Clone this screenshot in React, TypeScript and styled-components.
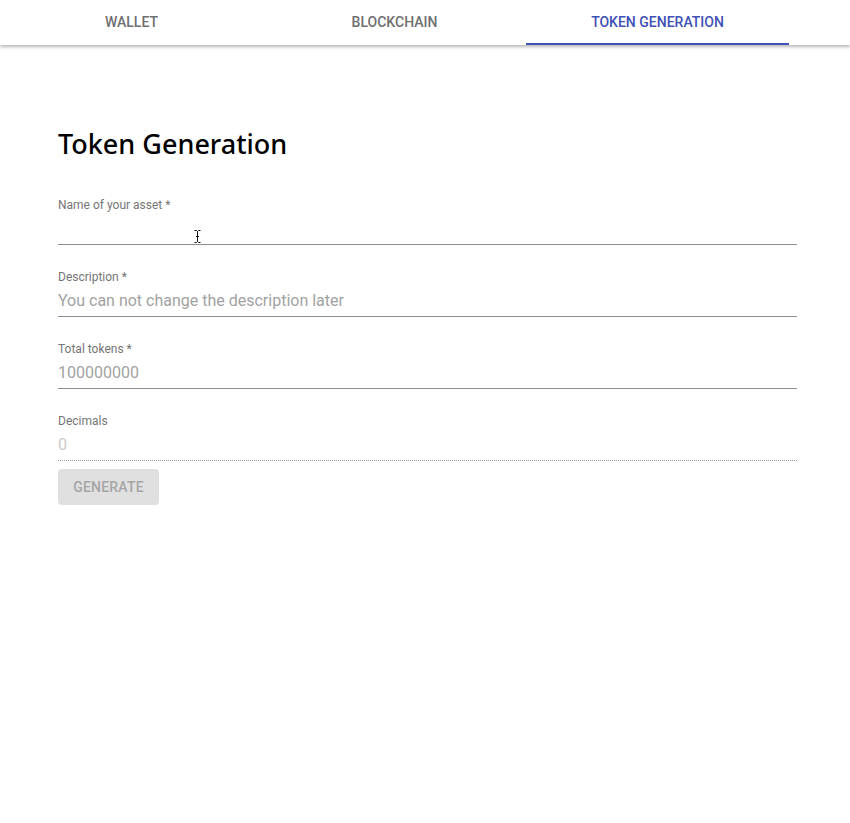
import React from "react";
import styled, { createGlobalStyle } from "styled-components";

const Global = createGlobalStyle`
  html, body { margin: 0; padding: 0; background: #fff; }
  body { font-family: Roboto, "Liberation Sans", sans-serif; }
  * { box-sizing: border-box; }
`;

const TabBar = styled.div`
  display: flex;
  height: 45px;
  background: #fff;
  box-shadow: 0 2px 3px rgba(0, 0, 0, 0.28);
  position: relative;
  z-index: 1;
`;

const Tab = styled.div<{ $active?: boolean }>`
  width: 263px;
  display: flex;
  align-items: center;
  justify-content: center;
  font-family: Roboto, sans-serif;
  font-size: 14px;
  font-weight: 500;
  text-transform: uppercase;
  color: ${(p) => (p.$active ? "#3f51b5" : "#6f6f6f")};
  border-bottom: 2px solid ${(p) => (p.$active ? "#3f51b5" : "transparent")};
`;

const Main = styled.main`
  padding: 83px 53px 0 58px;
`;

const Heading = styled.h1`
  margin: 0 0 38px;
  font-family: "Noto Sans", "Liberation Sans", sans-serif;
  font-weight: 500;
  font-size: 27px;
  line-height: 31px;
  color: #000;
`;

const Form = styled.div`
  display: flex;
  flex-direction: column;
  gap: 24px;
`;

const Field = styled.div`
  display: flex;
  flex-direction: column;
  height: 48px;
`;

const Label = styled.label`
  font-family: Roboto, sans-serif;
  font-size: 12px;
  line-height: 16px;
  color: #757575;
`;

const InputBox = styled.div<{ $disabled?: boolean }>`
  position: relative;
  height: 32px;
  padding: 6px 0 6px;
  font-family: Roboto, sans-serif;
  font-size: 16px;
  line-height: 19px;
  color: ${(p) => (p.$disabled ? "#cbcbcb" : "#a2a2a2")};
  border-bottom: 1px ${(p) => (p.$disabled ? "dotted" : "solid")}
    ${(p) => (p.$disabled ? "#9a9a9a" : "#8e8e8e")};
`;

const Cursor = styled.svg`
  position: absolute;
  left: 136px;
  top: 17px;
`;

const Button = styled.div`
  margin-top: 8px;
  width: 101px;
  height: 36px;
  border-radius: 4px;
  background: #e0e0e0;
  color: #a6a6a6;
  font-family: Roboto, sans-serif;
  font-size: 14px;
  font-weight: 500;
  letter-spacing: 0.2px;
  display: flex;
  align-items: center;
  justify-content: center;
  text-transform: uppercase;
`;

export default function App() {
  return (
    <>
      <Global />
      <TabBar>
        <Tab>Wallet</Tab>
        <Tab>Blockchain</Tab>
        <Tab $active>Token Generation</Tab>
      </TabBar>
      <Main>
        <Heading>Token Generation</Heading>
        <Form>
          <Field>
            <Label>Name of your asset *</Label>
            <InputBox>
              <Cursor width="7" height="13" viewBox="0 0 7 13">
                <path d="M0.5 0.5h2l1 1 1-1h2M3.5 1.5v10M0.5 12.5h2l1-1 1 1h2M2 6.5h3" stroke="#111" strokeWidth="1" fill="none" />
              </Cursor>
            </InputBox>
          </Field>
          <Field>
            <Label>Description *</Label>
            <InputBox>You can not change the description later</InputBox>
          </Field>
          <Field>
            <Label>Total tokens *</Label>
            <InputBox>100000000</InputBox>
          </Field>
          <Field>
            <Label>Decimals</Label>
            <InputBox $disabled>0</InputBox>
          </Field>
        </Form>
        <Button>Generate</Button>
      </Main>
    </>
  );
}
